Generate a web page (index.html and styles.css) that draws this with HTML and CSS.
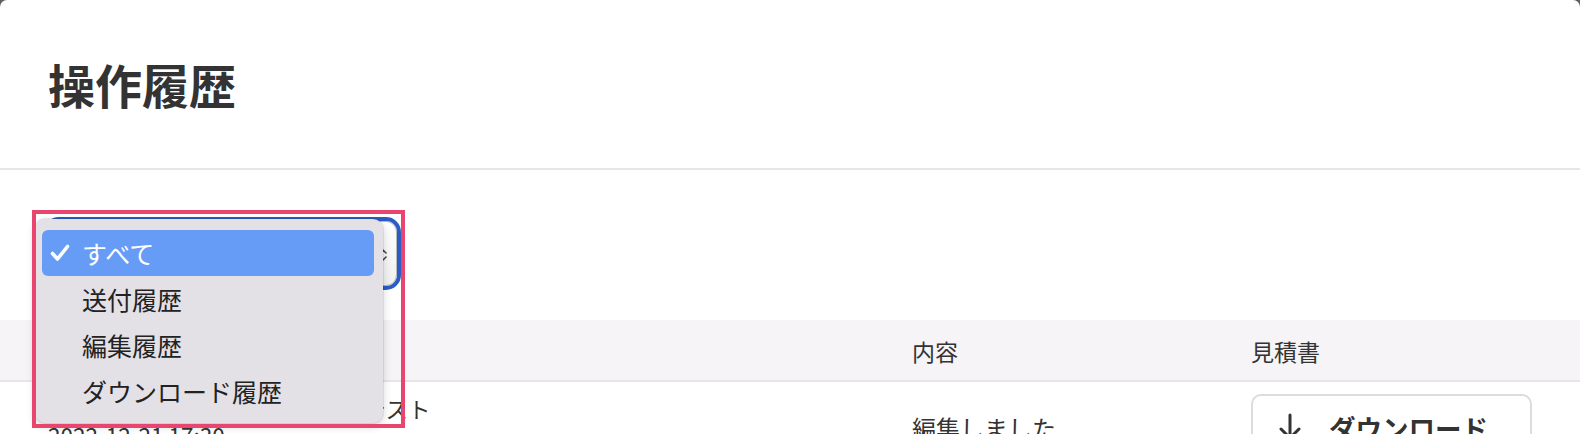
FILE: index.html
```html
<!DOCTYPE html>
<html lang="ja">
<head>
<meta charset="utf-8">
<title>操作履歴</title>
<link rel="stylesheet" href="styles.css">
</head>
<body>
<div class="panel">
  <header class="page-head">
    <h1 class="page-title">操作履歴</h1>
  </header>
  <section class="filter">
    <div class="select">
      <span class="select-value">すべて</span>
      <svg class="select-arrows" width="10" height="16" viewBox="0 0 10 16"><path d="M2 6 L5 3 L8 6 M2 10 L5 13 L8 10" fill="none" stroke="#444" stroke-width="1.6" stroke-linecap="round" stroke-linejoin="round"/></svg>
    </div>
  </section>
  <div class="table">
    <div class="trow thead">
      <div class="cell">日時</div>
      <div class="cell">内容</div>
      <div class="cell">見積書</div>
    </div>
    <div class="trow tbody">
      <div class="cell cell-main">
        <div class="line">テスト株式会社　見積書の送付テスト</div>
        <div class="line">2022-12-21 17:30</div>
      </div>
      <div class="cell cell-text">編集しました</div>
      <div class="cell">
        <button class="dl-btn">
          <svg class="dl-icon" width="26" height="30" viewBox="0 0 26 30"><path d="M13 3 V26 M4 17 L13 26 L22 17" fill="none" stroke="#333" stroke-width="3" stroke-linecap="round" stroke-linejoin="round"/></svg>
          <span>ダウンロード</span>
        </button>
      </div>
    </div>
  </div>

  <div class="menu">
    <div class="menu-item is-selected">
      <svg class="check" width="20" height="18" viewBox="0 0 20 18"><path d="M2.5 9.5 L7.5 15 L17.5 2.5" fill="none" stroke="#fff" stroke-width="3.6" stroke-linecap="round" stroke-linejoin="round"/></svg>
      <span>すべて</span>
    </div>
    <div class="menu-item"><span>送付履歴</span></div>
    <div class="menu-item"><span>編集履歴</span></div>
    <div class="menu-item"><span>ダウンロード履歴</span></div>
  </div>
  <div class="annot"></div>
</div>
</body>
</html>
```
FILE: styles.css
```css
* { box-sizing: border-box; }
html, body {
  margin: 0;
  padding: 0;
  background: #5e5e5e;
}
body {
  font-family: "Noto Sans CJK JP", "Noto Sans", "Liberation Sans", sans-serif;
  color: #333;
}
.panel {
  position: relative;
  width: 1580px;
  height: 434px;
  overflow: hidden;
  background: #fff;
  border-radius: 7px 7px 0 0;
}
.page-head {
  height: 170px;
  border-bottom: 2px solid #e6e6e6;
  display: flex;
  align-items: center;
  padding-left: 48px;
}
.page-title {
  margin: 0;
  font-size: 47px;
  font-weight: 700;
  color: #333;
  line-height: 1;
  position: relative;
  top: -1px;
}
.filter {
  padding: 51px 0 34px 48px;
}
.select {
  width: 349px;
  height: 65px;
  border-radius: 11px;
  border: 1px solid #b9b9b9;
  background: linear-gradient(#ffffff, #f0f0f0);
  outline: 4px solid #2b5cc5;
  outline-offset: 0;
  display: flex;
  align-items: center;
  justify-content: space-between;
  padding: 0 8px 0 20px;
  font-size: 24px;
}
.select-arrows { display: block; margin-top: 2px; }
.table { width: 100%; }
.trow {
  display: grid;
  grid-template-columns: 860px 337px 1fr;
  padding-left: 48px;
}
.thead {
  height: 62px;
  background: #f6f4f6;
  border-bottom: 2px solid #e6e6e6;
  align-items: center;
  font-size: 23px;
  color: #333;
}
.thead .cell { padding-top: 1px; }
.thead .cell:nth-child(2),
.tbody .cell:nth-child(2) { padding-left: 4px; }
.thead .cell:nth-child(3),
.tbody .cell:nth-child(3) { padding-left: 6px; }
.tbody {
  padding-top: 12px;
  align-items: start;
  font-size: 22.5px;
}
.cell-main { padding-top: 1px; }
.cell-main .line {
  line-height: 27px;
  height: 27px;
  white-space: nowrap;
}
.cell-text {
  font-size: 24px;
  padding-top: 16px;
}
.dl-btn {
  width: 281px;
  height: 66px;
  border: 2px solid #dcdcdc;
  border-radius: 10px;
  background: #fff;
  display: flex;
  align-items: center;
  gap: 26px;
  padding: 0 0 0 24px;
  font-family: inherit;
  font-size: 26.5px;
  font-weight: 700;
  color: #333;
}
.dl-icon { display: block; }

.menu {
  position: absolute;
  left: 35px;
  top: 219px;
  width: 348px;
  height: 204px;
  background: #e3e0e6;
  border-radius: 10px;
  box-shadow: 0 3px 10px rgba(0, 0, 0, 0.18), 0 0 0 1px rgba(0, 0, 0, 0.07);
  padding: 11px 9px 9px 7px;
}
.menu-item {
  height: 46px;
  display: flex;
  align-items: center;
  padding-left: 40px;
  font-size: 25px;
  color: #222;
  border-radius: 6px;
  position: relative;
}
.menu-item.is-selected {
  background: #679cf6;
  color: #fff;
}
.check {
  position: absolute;
  left: 8px;
  top: 14px;
}
.annot {
  position: absolute;
  left: 32px;
  top: 210px;
  width: 373px;
  height: 218px;
  border: 4.5px solid #e8466f;
}
```
